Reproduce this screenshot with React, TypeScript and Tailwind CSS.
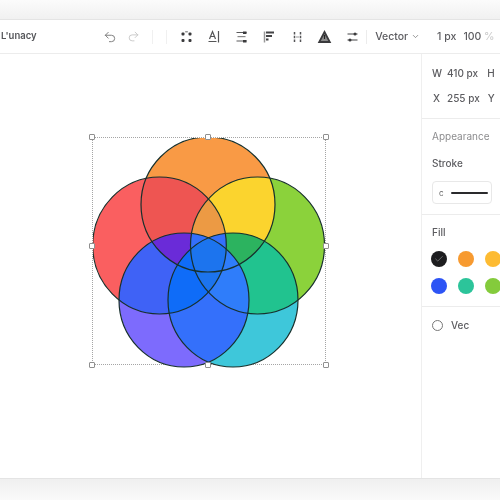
import { Undo2, Redo2, ChevronDown, Check } from 'lucide-react'
import type { ReactNode } from 'react'

type C = { id: string; cx: number; cy: number; rx: number; ry: number }

const circles: Record<string, C> = {
  t: { id: 't', cx: 115, cy: 66.5, rx: 67, ry: 67.5 },
  l: { id: 'l', cx: 66.5, cy: 107.5, rx: 66.8, ry: 68.5 },
  r: { id: 'r', cx: 164.5, cy: 107.5, rx: 67, ry: 68.5 },
  a: { id: 'a', cx: 91, cy: 162, rx: 65, ry: 67 },
  b: { id: 'b', cx: 140, cy: 162, rx: 65, ry: 67 },
}

// each region is painted over the ones before it, clipped to all circles named
const regions: [string, string][] = [
  ['t', '#f99a45'],
  ['l', '#fa5f60'],
  ['r', '#8bd23b'],
  ['a', '#7d6bfd'],
  ['b', '#3ec7da'],
  ['tl', '#ee5552'],
  ['tr', '#fbd42e'],
  ['la', '#3f62f6'],
  ['rb', '#21c38f'],
  ['ab', '#3470fb'],
  ['lb', '#1570fa'],
  ['ra', '#2d7cfb'],
  ['tlr', '#ec9a44'],
  ['tla', '#6a2bd8'],
  ['trb', '#2cb35f'],
  ['tlrab', '#2c78e4'],
  ['tlra', '#5b5fe0'],
  ['tlrb', '#2f9a78'],
  ['tlb', '#2c6fe6'],
  ['tra', '#2c78e4'],
  ['lab', '#0f6cf8'],
  ['rab', '#2f7dfa'],
  ['lra', '#3470fb'],
  ['lrb', '#3470fb'],
  ['lrab', '#1c74ee'],
]

function Region({ keys, fill }: { keys: string; fill: string }) {
  const list = keys.split('')
  const last = circles[list[list.length - 1]]
  let node: ReactNode = <ellipse cx={last.cx} cy={last.cy} rx={last.rx} ry={last.ry} fill={fill} />
  list.slice(0, -1).forEach((k) => {
    node = <g clipPath={`url(#clip-${k})`}>{node}</g>
  })
  return <>{node}</>
}

function Venn() {
  const all = Object.values(circles)
  return (
    <svg width="234" height="232" viewBox="0 0 234 232" className="block">
      <defs>
        {all.map((c) => (
          <clipPath key={c.id} id={`clip-${c.id}`}>
            <ellipse cx={c.cx} cy={c.cy} rx={c.rx} ry={c.ry} />
          </clipPath>
        ))}
      </defs>
      {regions.map(([k, f]) => (
        <Region key={k} keys={k} fill={f} />
      ))}
      {all.map((c) => (
        <ellipse key={c.id} cx={c.cx} cy={c.cy} rx={c.rx} ry={c.ry} fill="none" stroke="#17302c" strokeWidth="1.2" />
      ))}
    </svg>
  )
}

function Handle({ className }: { className: string }) {
  return <span className={`absolute w-[6px] h-[6px] bg-white border border-[#8f8f8f] rounded-[1px] ${className}`} />
}

function ToolIcon({ children }: { children: ReactNode }) {
  return (
    <svg width="27" height="16" viewBox="0 0 27 16" fill="none" stroke="#3d3d3f" strokeWidth="1.5" className="shrink-0">
      {children}
    </svg>
  )
}

function Toolbar() {
  return (
    <div className="h-[34px] shrink-0 flex items-center border-b border-[#ececec] text-[#5c5c60] text-[10.5px]">
      <span className="w-[103px] shrink-0 pl-[1px] font-semibold text-[#55565a] text-[9.5px]">L'unacy</span>
      <Undo2 size={14} strokeWidth={1.6} className="text-[#777] shrink-0" />
      <Redo2 size={13} strokeWidth={1.6} className="text-[#c4c4c4] shrink-0 ml-[10px]" />
      <span className="w-px h-[14px] bg-[#f0f0f0] ml-[12px]" />
      <span className="w-px h-[14px] bg-[#f0f0f0] ml-[13px] mr-[6px]" />
      <div className="flex gap-[0.7px]">
        <ToolIcon>
          <g fill="#3a3a3c" stroke="none">
            <rect x="8.5" y="3.5" width="3" height="3" rx="1" />
            <rect x="15.5" y="3.5" width="3" height="3" rx="1" />
            <rect x="12" y="2" width="3" height="1.5" rx="0.7" fill="#999" />
            <rect x="8.5" y="10" width="3" height="3" rx="1" />
            <rect x="15.5" y="10" width="3" height="3" rx="1" />
          </g>
        </ToolIcon>
        <ToolIcon>
          <path d="M8.5 10 L11.5 2.5 L14.5 10 M9.7 7.5 H13.3 M17.5 2 V13.5 M7.5 12.5 H15.5" stroke="#545456" strokeWidth="1.2" />
        </ToolIcon>
        <ToolIcon>
          <path d="M8.5 3.5 H18.5 M8.5 12 H18.5" stroke="#5a5a5c" strokeWidth="1.1" />
          <rect x="15" y="2.5" width="3.5" height="2.5" fill="#3a3a3c" stroke="none" />
          <rect x="9.5" y="7" width="8" height="1.2" fill="#888" stroke="none" />
          <rect x="15" y="11" width="3.5" height="2.5" fill="#3a3a3c" stroke="none" />
        </ToolIcon>
        <ToolIcon>
          <path d="M8.5 2.5 V13.5" stroke="#999" />
          <path d="M10 3.5 H18 M10 7 H16 M10 10.5 H12.5" stroke="#444446" strokeWidth="2" />
        </ToolIcon>
        <ToolIcon>
          <path d="M10.5 3 V13 M16.5 3 V13" stroke="#555557" strokeDasharray="2.5 1.2" />
          <path d="M12 8 H15" stroke="#999" strokeWidth="1" />
        </ToolIcon>
        <ToolIcon>
          <path d="M13.5 3 L18.8 13 H8.2 Z" stroke="#3a3a3c" strokeWidth="1.8" fill="#8a8a8a" />
          <path d="M13.5 6 V10" stroke="#222" strokeWidth="1.2" />
        </ToolIcon>
        <ToolIcon>
          <path d="M8.5 5 H18.5 M8.5 11 H18.5" stroke="#444446" strokeWidth="1.2" />
          <circle cx="16" cy="5" r="1.5" fill="#3a3a3c" stroke="none" />
          <circle cx="11" cy="11" r="1.5" fill="#3a3a3c" stroke="none" />
        </ToolIcon>
      </div>
      <span className="w-px h-[14px] bg-[#ececec]" />
      <span className="ml-[8px] font-medium">Vector</span>
      <ChevronDown size={9} strokeWidth={2} className="ml-[3px] text-[#777]" />
      <span className="ml-[17px] font-medium">1 px</span>
      <span className="ml-[7px] font-medium">
        100 <span className="text-[#cdcdcd]">%</span>
      </span>
    </div>
  )
}

function Swatch({ color, checked }: { color: string; checked?: boolean }) {
  return (
    <span className="w-[16px] h-[16px] rounded-full shrink-0 flex items-center justify-center" style={{ background: color }}>
      {checked && <Check size={10} strokeWidth={1.5} className="text-[#9a9a9a]" />}
    </span>
  )
}

function Panel() {
  return (
    <aside className="w-[79px] shrink-0 border-l border-[#efefef] overflow-hidden text-[10px] text-[#5c5c60]">
      <div className="h-[65px] pl-[10px] pt-[12px] border-b border-[#ececec] font-medium whitespace-nowrap flex flex-col gap-[11px]">
        <div className="flex h-[14px] items-center">
          <span className="w-[15px]">W</span>
          <span>410 px</span>
          <span className="ml-[9px]">H</span>
        </div>
        <div className="flex h-[14px] items-center">
          <span className="w-[15px] pl-[1px]">X</span>
          <span>255 px</span>
          <span className="ml-[8px]">Y</span>
        </div>
      </div>
      <div className="h-[96px] pl-[10px] pt-[10px] border-b border-[#ececec]">
        <p className="text-[#8c8c8e] h-[15px] leading-[15px]">Appearance</p>
        <p className="mt-[12px] h-[15px] leading-[15px] font-medium">Stroke</p>
        <div className="mt-[10px] w-[60px] h-[23px] border border-[#e8e8e8] rounded-[4px] flex items-center pl-[6px] gap-[7px]">
          <span className="text-[8px] text-[#666]">c</span>
          <span className="w-[37px] h-[2px] bg-[#2a2a2c] rounded-full" />
        </div>
      </div>
      <div className="h-[92px] pl-[9px] pt-[10px] border-b border-[#ececec]">
        <p className="h-[15px] leading-[15px] font-medium pl-[1px]">Fill</p>
        <div className="mt-[11px] flex gap-[11px]">
          <Swatch color="#1d1d1f" checked />
          <Swatch color="#f79a30" />
          <Swatch color="#fdbb33" />
        </div>
        <div className="mt-[11px] flex gap-[11px]">
          <Swatch color="#2d54f5" />
          <Swatch color="#2cc49a" />
          <Swatch color="#84cb3c" />
        </div>
      </div>
      <div className="pl-[10px] pt-[11px] flex items-center gap-[8px] font-medium">
        <span className="w-[11px] h-[11px] rounded-full border border-[#777] shrink-0" />
        <span>Vec</span>
      </div>
    </aside>
  )
}

export default function App() {
  return (
    <div className="w-[500px] h-[500px] overflow-hidden flex flex-col bg-[#f9f9f9] blur-[0.35px] [font-family:'Inter','Liberation_Sans',sans-serif]">
      <div className="h-[19px] shrink-0 bg-gradient-to-b from-[#fbfbfb] to-[#f1f1f1]" />
      <div className="h-[460px] shrink-0 bg-white flex flex-col border-y border-[#e4e4e4]">
        <Toolbar />
        <div className="flex-1 flex min-h-0">
          <main className="flex-1 pl-[92px] pt-[83px]">
            <div className="relative w-[234px] h-[228px] border border-dotted border-[#a5a5a5]">
              <div className="absolute left-0 top-0">
                <Venn />
              </div>
              <Handle className="left-[-4px] top-[-4px]" />
              <Handle className="left-[112px] top-[-4px]" />
              <Handle className="right-[-4px] top-[-4px]" />
              <Handle className="left-[-4px] top-[105px]" />
              <Handle className="right-[-4px] top-[105px]" />
              <Handle className="left-[-4px] bottom-[-4px]" />
              <Handle className="left-[112px] bottom-[-4px]" />
              <Handle className="right-[-4px] bottom-[-4px]" />
            </div>
          </main>
          <Panel />
        </div>
      </div>
      <div className="flex-1 bg-gradient-to-b from-[#efefef] to-[#fafafa]" />
    </div>
  )
}
